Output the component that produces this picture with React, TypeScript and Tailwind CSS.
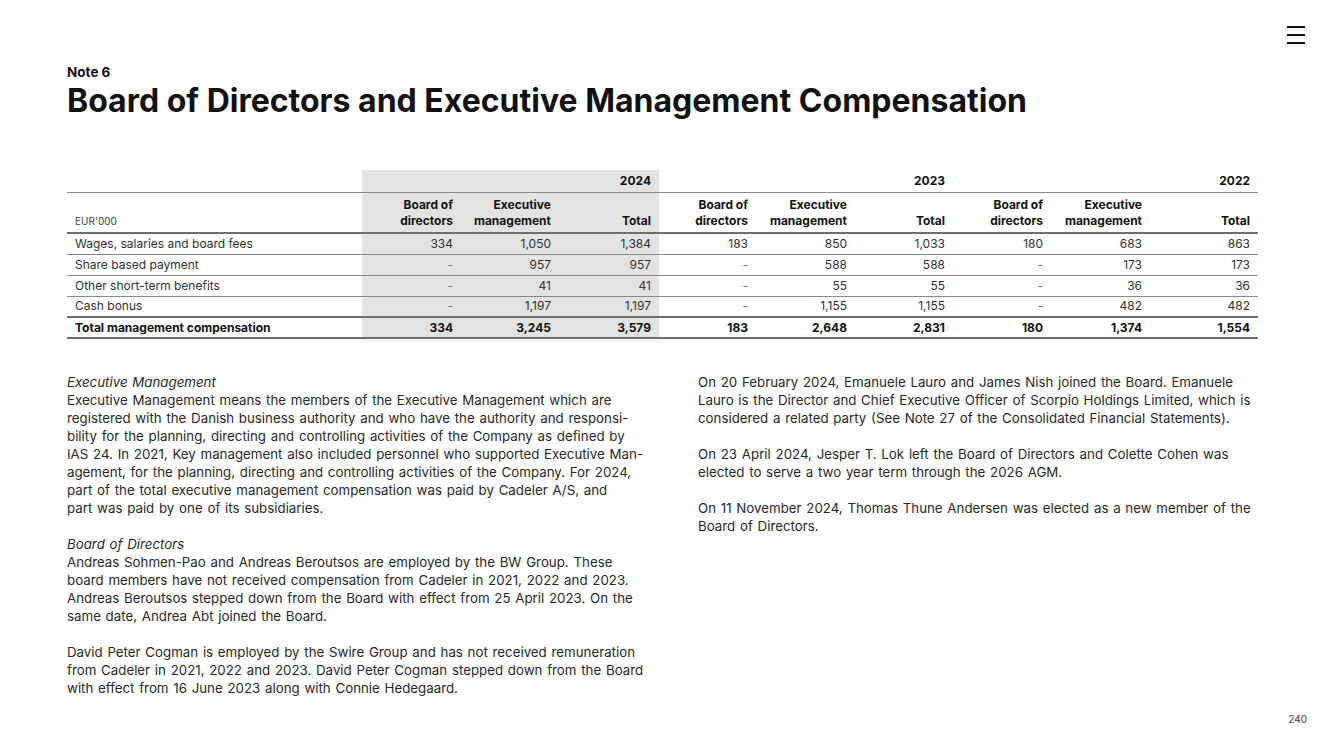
import React from "react";

const rows = [
  ["Wages, salaries and board fees", "334", "1,050", "1,384", "183", "850", "1,033", "180", "683", "863"],
  ["Share based payment", "-", "957", "957", "-", "588", "588", "-", "173", "173"],
  ["Other short-term benefits", "-", "41", "41", "-", "55", "55", "-", "36", "36"],
  ["Cash bonus", "-", "1,197", "1,197", "-", "1,155", "1,155", "-", "482", "482"],
];
const total = ["Total management compensation", "334", "3,245", "3,579", "183", "2,648", "2,831", "180", "1,374", "1,554"];

function cellBg(i: number) {
  return i >= 1 && i <= 3 ? "bg-[#e3e3e3]" : "";
}

function Lines({ lines }: { lines: string[] }) {
  return (
    <p className="whitespace-nowrap">
      {lines.map((l, i) => (
        <React.Fragment key={i}>
          {l}
          {i < lines.length - 1 && <br />}
        </React.Fragment>
      ))}
    </p>
  );
}

export default function App() {
  return (
    <div
      className="relative w-[1333px] h-[749px] bg-white text-[#222] overflow-hidden"
      style={{ fontFamily: "Inter, 'Liberation Sans', sans-serif" }}
    >
      <div className="absolute right-[28px] top-[26px] w-[18px] flex flex-col gap-[6px]">
        <div className="h-[2px] bg-[#111]" />
        <div className="h-[2px] bg-[#111]" />
        <div className="h-[2px] bg-[#111]" />
      </div>

      <div className="pl-[67px] pr-[75px] pt-[64px]">
        <div className="text-[13.5px] font-bold leading-[17px] text-[#111]">Note 6</div>
        <h1 className="text-[32px] font-bold leading-[38px] text-[#111] mt-[1px]">
          Board of Directors and Executive Management Compensation
        </h1>

        <table className="mt-[50px] w-[1191px] table-fixed border-collapse text-[12px] text-[#333]">
          <colgroup>
            <col className="w-[295px]" />
            <col className="w-[99px]" />
            <col className="w-[98px]" />
            <col className="w-[100px]" />
            <col className="w-[97px]" />
            <col className="w-[99px]" />
            <col className="w-[98px]" />
            <col className="w-[98px]" />
            <col className="w-[99px]" />
            <col className="w-[108px]" />
          </colgroup>
          <thead>
            <tr className="h-[22px] font-bold text-[#111]">
              <th className="border-b border-[#8a8a8a]" />
              <th colSpan={3} className="bg-[#e3e3e3] border-b border-[#8a8a8a] text-right pr-[8px] align-bottom pb-[2px]">2024</th>
              <th colSpan={3} className="border-b border-[#8a8a8a] text-right pr-[8px] align-bottom pb-[2px]">2023</th>
              <th colSpan={3} className="border-b border-[#8a8a8a] text-right pr-[8px] align-bottom pb-[2px]">2022</th>
            </tr>
            <tr className="h-[41px] font-bold text-[#111] leading-[16px]">
              <th className="text-left font-normal text-[10px] text-[#444] pl-[8px] align-bottom pb-[3px] border-b-2 border-[#6f6f6f]">EUR'000</th>
              {Array.from({ length: 3 }).map((_, g) => (
                <React.Fragment key={g}>
                  <th className={`text-right pr-[8px] align-bottom pb-[3px] border-b-2 border-[#6f6f6f] ${g === 0 ? "bg-[#e3e3e3]" : ""}`}>Board of<br />directors</th>
                  <th className={`text-right pr-[8px] align-bottom pb-[3px] border-b-2 border-[#6f6f6f] ${g === 0 ? "bg-[#e3e3e3]" : ""}`}>Executive<br />management</th>
                  <th className={`text-right pr-[8px] align-bottom pb-[3px] border-b-2 border-[#6f6f6f] ${g === 0 ? "bg-[#e3e3e3]" : ""}`}>Total</th>
                </React.Fragment>
              ))}
            </tr>
          </thead>
          <tbody>
            {rows.map((r, ri) => (
              <tr key={ri} className={`h-[21px] ${ri === rows.length - 1 ? "border-b-2 border-[#6f6f6f]" : "border-b border-[#8a8a8a]"}`}>
                {r.map((c, ci) => (
                  <td
                    key={ci}
                    className={`${ci === 0 ? "text-left pl-[8px]" : "text-right pr-[8px]"} ${cellBg(ci)} ${c === "-" ? "text-[#777]" : ""}`}
                  >
                    {c}
                  </td>
                ))}
              </tr>
            ))}
            <tr className="h-[21px] border-b-2 border-[#6f6f6f] font-bold text-[#111]">
              {total.map((c, ci) => (
                <td key={ci} className={`${ci === 0 ? "text-left pl-[8px]" : "text-right pr-[8px]"} ${cellBg(ci)}`}>
                  {c}
                </td>
              ))}
            </tr>
          </tbody>
        </table>

        <div className="mt-[34px] grid grid-cols-[631px_560px] text-[13.3px] leading-[18px] text-[#2a2a2a] [word-spacing:1px]">
          <div>
            <p className="italic">Executive Management</p>
            <Lines
              lines={[
                "Executive Management means the members of the Executive Management which are",
                "registered with the Danish business authority and who have the authority and responsi-",
                "bility for the planning, directing and controlling activities of the Company as defined by",
                "IAS 24. In 2021, Key management also included personnel who supported Executive Man-",
                "agement, for the planning, directing and controlling activities of the Company. For 2024,",
                "part of the total executive management compensation was paid by Cadeler A/S, and",
                "part was paid by one of its subsidiaries.",
              ]}
            />
            <p className="italic mt-[18px]">Board of Directors</p>
            <Lines
              lines={[
                "Andreas Sohmen-Pao and Andreas Beroutsos are employed by the BW Group. These",
                "board members have not received compensation from Cadeler in 2021, 2022 and 2023.",
                "Andreas Beroutsos stepped down from the Board with effect from 25 April 2023. On the",
                "same date, Andrea Abt joined the Board.",
              ]}
            />
            <div className="h-[18px]" />
            <Lines
              lines={[
                "David Peter Cogman is employed by the Swire Group and has not received remuneration",
                "from Cadeler in 2021, 2022 and 2023. David Peter Cogman stepped down from the Board",
                "with effect from 16 June 2023 along with Connie Hedegaard.",
              ]}
            />
          </div>
          <div>
            <Lines
              lines={[
                "On 20 February 2024, Emanuele Lauro and James Nish joined the Board. Emanuele",
                "Lauro is the Director and Chief Executive Officer of Scorpio Holdings Limited, which is",
                "considered a related party (See Note 27 of the Consolidated Financial Statements).",
              ]}
            />
            <div className="h-[18px]" />
            <Lines
              lines={[
                "On 23 April 2024, Jesper T. Lok left the Board of Directors and Colette Cohen was",
                "elected to serve a two year term through the 2026 AGM.",
              ]}
            />
            <div className="h-[18px]" />
            <Lines
              lines={[
                "On 11 November 2024, Thomas Thune Andersen was elected as a new member of the",
                "Board of Directors.",
              ]}
            />
          </div>
        </div>
      </div>

      <div className="absolute right-[26px] top-[712px] text-[10px] text-[#444]">240</div>
    </div>
  );
}
